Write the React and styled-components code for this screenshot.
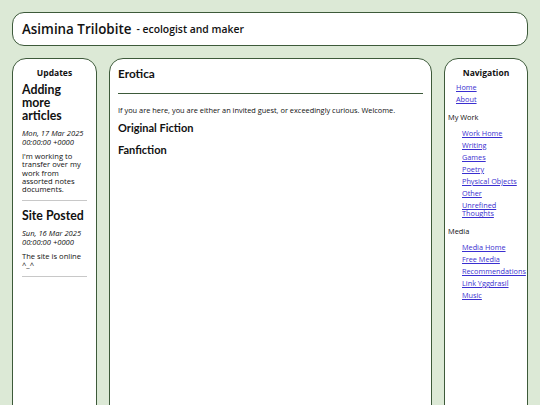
import React from "react";
import styled, { createGlobalStyle } from "styled-components";

const Global = createGlobalStyle`
  html, body { margin: 0; padding: 0; background: #dce9d6; }
  body { font-family: "Open Sans", "Noto Sans", sans-serif; color: #111; }
  * { box-sizing: border-box; }
`;

const Page = styled.div`
  padding: 12px 12px 0 12px;
  height: 405px;
  overflow: hidden;
  display: flex;
  flex-direction: column;
  gap: 12px;
`;

const Header = styled.header`
  background: #fff;
  border: 1.5px solid #3d5a3a;
  border-radius: 12px;
  height: 34px;
  display: flex;
  align-items: center;
  padding: 0 9px;
  flex-shrink: 0;
`;

const Title = styled.span`
  font-size: 13.4px;
  font-weight: 600;
`;
const Sub = styled.span`
  font-size: 10.4px;
  font-weight: 600;
  margin-left: 5px;
`;

const Columns = styled.div`
  display: grid;
  grid-template-columns: 85px 1fr 84px;
  gap: 12px;
  flex: 1;
  min-height: 420px;
`;

const Panel = styled.div`
  background: #fff;
  border: 1.5px solid #3d5a3a;
  border-radius: 14px;
  padding: ${(p) => p.$pad || "8px 9px"};
  min-height: 420px;
`;

const SideTitle = styled.div`
  text-align: center;
  font-size: 8.5px;
  font-weight: 700;
  margin-bottom: 5px;
`;

const PostTitle = styled.div`
  font-family: "Lato", "Open Sans", sans-serif;
  font-size: 12.3px;
  line-height: 13px;
  font-weight: 700;
  margin-bottom: 7px;
`;

const PostDate = styled.div`
  font-size: 7.6px;
  font-style: italic;
  line-height: 8.5px;
  margin-bottom: 6px;
`;

const PostBody = styled.div`
  font-size: 7.6px;
  line-height: 8.3px;
`;

const Rule = styled.hr`
  border: none;
  border-top: 1px solid #c8c8c8;
  margin: 7px 0 8px 0;
`;

const CenterTitle = styled.h2`
  margin: 2px 0 0 0;
  font-family: "Lato", "Open Sans", sans-serif;
  font-size: 11.8px;
  line-height: 14px;
  font-weight: 700;
`;

const DarkRule = styled.hr`
  border: none;
  border-top: 1.5px solid #3d5a3a;
  margin: 12px 0 12px 0;
`;

const Para = styled.p`
  margin: 0 0 6px 0;
  font-size: 7.4px;
  line-height: 9px;
`;

const SubHead = styled.h3`
  margin: 0 0 8px 0;
  font-family: "Lato", "Open Sans", sans-serif;
  font-size: 11px;
  line-height: 14px;
  font-weight: 700;
`;

const NavList = styled.ul`
  list-style: none;
  margin: 0;
  padding: 0 0 0 ${(p) => p.$indent || 2}px;
  display: flex;
  flex-direction: column;
  gap: 3.2px;
`;

const NavLink = styled.a`
  color: #3a2fd0;
  font-size: 7.3px;
  line-height: 8.8px;
  text-decoration: underline;
  display: block;
`;

const Group = styled.div`
  font-size: 7.4px;
  margin: 8px 0 7px -4px;
`;

const updates = [
  {
    title: "Adding more articles",
    date: "Mon, 17 Mar 2025 00:00:00 +0000",
    body: "I'm working to transfer over my work from assorted notes documents.",
  },
  {
    title: "Site Posted",
    date: "Sun, 16 Mar 2025 00:00:00 +0000",
    body: "The site is online ^_^",
  },
];

const work = ["Work Home", "Writing", "Games", "Poetry", "Physical Objects", "Other", "Unrefined Thoughts"];
const media = ["Media Home", "Free Media", "Recommendations", "Link Yggdrasil", "Music"];

export default function App() {
  return (
    <>
      <Global />
      <Page>
        <Header>
          <Title>Asimina Trilobite</Title>
          <Sub>- ecologist and maker</Sub>
        </Header>
        <Columns>
          <Panel $pad="8px 9px">
            <SideTitle>Updates</SideTitle>
            {updates.map((u) => (
              <div key={u.title}>
                <PostTitle>{u.title}</PostTitle>
                <PostDate>{u.date}</PostDate>
                <PostBody>{u.body}</PostBody>
                <Rule />
              </div>
            ))}
          </Panel>
          <Panel $pad="6px 8px">
            <CenterTitle>Erotica</CenterTitle>
            <DarkRule />
            <Para>If you are here, you are either an invited guest, or exceedingly curious. Welcome.</Para>
            <SubHead>Original Fiction</SubHead>
            <SubHead>Fanfiction</SubHead>
          </Panel>
          <Panel $pad="8px 7px">
            <SideTitle>Navigation</SideTitle>
            <NavList $indent={4}>
              <li><NavLink href="#">Home</NavLink></li>
              <li><NavLink href="#">About</NavLink></li>
            </NavList>
            <Group>My Work</Group>
            <NavList $indent={10}>
              {work.map((w) => (
                <li key={w}><NavLink href="#">{w}</NavLink></li>
              ))}
            </NavList>
            <Group>Media</Group>
            <NavList $indent={10}>
              {media.map((w) => (
                <li key={w}><NavLink href="#">{w}</NavLink></li>
              ))}
            </NavList>
          </Panel>
        </Columns>
      </Page>
    </>
  );
}
